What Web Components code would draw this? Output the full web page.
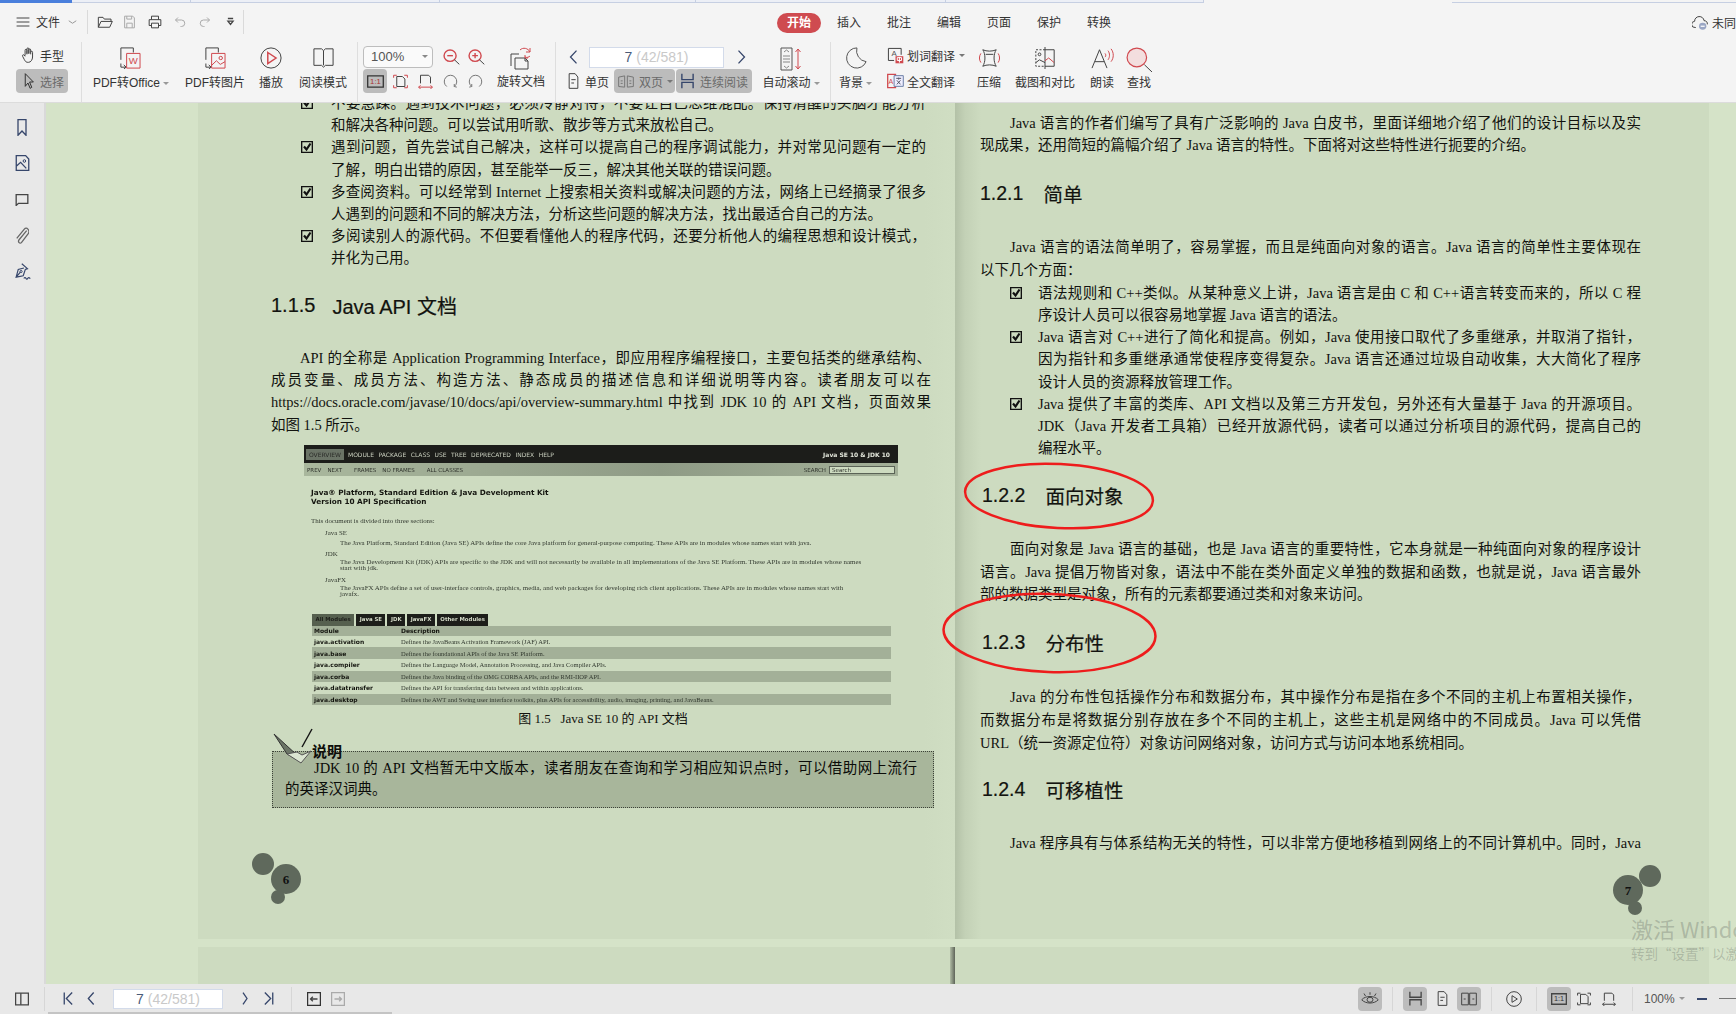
<!DOCTYPE html>
<html lang="zh-CN">
<head>
<meta charset="utf-8">
<title>PDF</title>
<style>
  html, body { margin: 0; padding: 0; height: 100%; overflow: hidden; }
  body { font-family: "Liberation Sans", "Noto Sans CJK SC", sans-serif; }
</style>
</head>
<body>
<wps-app></wps-app>
<script>
const RED = '#d0494f';
const NAVY = '#36466b';
// body copy is typed with plain commas, the book prints full-width ones
const cn = s => s.replace(/,/g, '\uFF0C');
const ICONS = {
  menu: '<path d="M1 4h22M1 12h22M1 20h22"/>',
  chev: '<path stroke="#999" d="M2 7l10 10L22 7"/>',
  folder: '<path d="M2 21V4h7l2 3h10v4M2 21l4-10h17l-4 10z"/>',
  save: '<g stroke="#aaa"><path d="M3 2h15l3 3v17H3z"/><path d="M7 22v-8h10v8M7 2v5h9V2"/></g>',
  print: '<path d="M6 8V2h12v6M6 18H2V8h20v10h-4M6 14h12v8H6z"/>',
  undo: '<path stroke="#aaa" d="M8 3L3 8l5 5M3 8h12a6.500 6.500 0 0 1 0 13h-2"/>',
  redo: '<path stroke="#aaa" d="M16 3l5 5-5 5M21 8H9a6.500 6.500 0 0 0 0 13h2"/>',
  more: '<path stroke-width="1.300" d="M5 4h14M5 11h14l-7 9z"/>',
  hand: '<path d="M7 13V5a1.600 1.600 0 0 1 3.200 0v6M10.200 10V3a1.600 1.600 0 0 1 3.200 0v7M13.400 10V4.500a1.600 1.600 0 0 1 3.200 0V11M16.600 8a1.600 1.600 0 0 1 3.200 0v7c0 4-3 8-7 8h-1c-3 0-4-1-6-4l-3-5c-1-2 1-3 2.500-2L7 14"/>',
  cursor: '<path stroke="#333" d="M6 1v19l5-5 4 8 3-1.500-4-8h7z"/>',
  pdfoffice: `<path d="M3 14V1h13v5M3 18v4h5M6 19.500l2.500 2.500L6 24"/><rect x="9" y="7" width="14" height="16" stroke="${RED}"/><text x="16" y="19" font-size="10" text-anchor="middle" fill="${RED}" stroke="none" font-family="Liberation Sans">W</text>`,
  pdfimage: `<path d="M3 14V1h13v5M3 18v4h5M6 19.500l2.500 2.500L6 24"/><g stroke="${RED}"><rect x="9" y="7" width="14" height="16"/><circle cx="18.500" cy="12" r="1.800"/><path d="M9 20l5-5 4 4 5-3"/></g>`,
  play: `<circle cx="12" cy="12" r="11" stroke="#444"/><path stroke="${RED}" stroke-width="1.500" d="M8.500 6l9 6-9 6z"/>`,
  book: '<path d="M2 2h8l2 2 2-2h8v18h-8l-2 2-2-2H2zM12 4v16"/>',
  zoomout: `<circle cx="10" cy="10" r="8.500" stroke="${RED}" stroke-width="1.400"/><path stroke="${RED}" stroke-width="1.400" d="M6 10h8"/><path d="M16 16l7 7"/>`,
  zoomin: `<circle cx="10" cy="10" r="8.500" stroke="${RED}" stroke-width="1.400"/><path stroke="${RED}" stroke-width="1.400" d="M6 10h8M10 6v8"/><path d="M16 16l7 7"/>`,
  rotatedoc: `<path d="M2 20V8h8M6 23V12h10l3 3v8zM16 12v3h3"/><path stroke="${RED}" d="M11 4c3-3 8-2 10 2M21 2v4h-4M21 10c-1 1-3 2-5 1M16 9v3h3"/>`,
  actual: `<rect x="1" y="3" width="22" height="18" stroke="#333" stroke-width="1.300"/><text x="12" y="16" font-size="11" text-anchor="middle" fill="#a33" stroke="none" font-family="Liberation Sans">1:1</text>`,
  fitpage: `<path stroke="${RED}" d="M1 6V2h5M18 2h5v4M1 18v4h5M18 22h5v-4"/><path d="M6 4h9l4 4v12H6z"/>`,
  fitwidth: `<path d="M4 15V2h13l3 3v10"/><path stroke="${RED}" d="M1 21h22M4 18l-3 3 3 3M20 18l3 3-3 3"/>`,
  rotl: '<path stroke="#777" d="M6 20A10 10 0 1 1 18 20M18 20v-4M18 20l4 1"/>',
  rotr: '<path stroke="#777" d="M18 20A10 10 0 1 0 6 20M6 20v-4M6 20l-4 1"/>',
  prev: `<path stroke="${NAVY}" stroke-width="1.300" d="M20 1L4 12l16 11"/>`,
  next: `<path stroke="${NAVY}" stroke-width="1.300" d="M4 1l16 11L4 23"/>`,
  first: `<path stroke="${NAVY}" stroke-width="1.300" d="M3 1v22M22 1L8 12l14 11"/>`,
  last: `<path stroke="${NAVY}" stroke-width="1.300" d="M21 1v22M2 1l14 11L2 23"/>`,
  single: '<path d="M4 1h11l5 5v17H4zM8 10h8M8 15h5"/>',
  double: `<path stroke="#777" d="M1 5l9-2v18l-9-1zM23 5l-9-2v18l9-1zM4 11h3M17 11h3M4 15h3M17 15h3"/>`,
  cont: `<path stroke="${NAVY}" stroke-width="1.400" d="M3 1v9h18V1M3 23v-9h18v9"/>`,
  autoscroll: `<rect x="2" y="1" width="11" height="22" stroke="#555"/><path stroke="#888" d="M5 5l2.500-2L10 5M5 19l2.500 2 2.500-2M4 9h7M4 12h7M4 15h7"/><path stroke="${RED}" d="M19 2v20M16.500 5L19 2l2.500 3M16.500 19l2.500 3 2.500-3"/>`,
  moon: '<path stroke="#555" d="M13 1A11 11 0 1 0 23 16 12 12 0 0 1 13 1z"/>',
  transword: `<path d="M2 19V2h18v9M2 19h8"/><text x="10" y="13" font-size="11" text-anchor="middle" fill="#555" stroke="none" font-family="Liberation Sans">A</text><rect x="12" y="13" width="11" height="10" fill="${RED}" stroke="none"/><path stroke="#fff" d="M14.500 15v4h6v-4zM17.500 14v8"/>`,
  transfull: `<rect x="1" y="2" width="11" height="20" stroke="${RED}" stroke-width="1.300"/><rect x="10" y="4" width="13" height="16" fill="#eef" stroke="#6c7fa6"/><text x="5.500" y="16" font-size="10" text-anchor="middle" fill="${RED}" stroke="none" font-family="Liberation Sans">A</text><path stroke="#556" d="M13 8h7M16.500 7v3M14 17l5-6M14 11l5 6"/>`,
  compress: `<path d="M5 3c4 2 10 2 14 0-3 5-3 13 0 18-4-2-10-2-14 0 3-5 3-13 0-18zM8 8h8"/><path stroke="${RED}" d="M3 7c-2 3-2 7 0 10M21 7c2 3 2 7 0 10"/>`,
  compare: `<path stroke-dasharray="2 1.500" d="M12 3H2v18h10"/><path d="M12 3h10v18H12M12 0v24"/><circle cx="6" cy="8" r="1.500"/><path d="M2 17l4-3 6 3"/><path stroke="${RED}" d="M12 15l4-3 6 5"/>`,
  read: `<path stroke="#444" d="M2 23L9.500 3 17 23M5 16h9"/><path stroke="${RED}" d="M15 7c1 1 1 3 0 4M18 4c2 3 2 7 0 10M21 2c3 4 3 10 0 14"/>`,
  find: `<circle cx="10" cy="10" r="9" stroke="${RED}" fill="#f3dede" stroke-width="1.200"/><path d="M17 17l7 7"/>`,
  cloud: '<path d="M6 20H5a5 5 0 0 1-1-10 7 7 0 0 1 14-1 5.500 5.500 0 0 1 5 6"/><circle cx="16" cy="18" r="5.500" fill="#9aa6c4" stroke="none"/><path stroke="#fff" stroke-width="1.200" d="M13 18h6"/>',
  bookmark: `<path stroke="${NAVY}" stroke-width="1.300" d="M4 1h16v22l-8-6-8 6z"/>`,
  picture: `<path stroke="${NAVY}" stroke-width="1.300" d="M2 1h15l5 5v17H2zM2 17l7-6 9 9"/><circle cx="15" cy="9" r="2" stroke="${NAVY}"/>`,
  comment: '<path stroke-width="1.300" d="M2 3h20v16H6l-4 4z"/>',
  clip: '<path stroke="#666" stroke-width="1.300" d="M20 5L7 18a2.500 2.500 0 0 0 4 4L23 9c3-4-3-10-7-6L3 16"/>',
  pen: `<path stroke="${NAVY}" stroke-width="1.200" d="M11 1l8 7-3 1-3 9-10 2 3-11 8-2M3 20l6-7"/><circle cx="10" cy="12" r="1.500" stroke="${NAVY}"/><path stroke="${NAVY}" stroke-width="1.200" d="M14 22c1-2 2-2 3 0s2 0 3-1 2 0 3 1"/>`,
  panel: '<rect x="1" y="2" width="22" height="20" stroke-width="1.300"/><path stroke-width="1.300" d="M10 2v20"/>',
  back: `<rect x="1" y="1" width="22" height="22" stroke="#333" stroke-width="1.300"/><path stroke-width="1.300" d="M18 12H6M10 8l-4 4 4 4"/>`,
  fwd: `<rect x="1" y="1" width="22" height="22" stroke="#aaa" stroke-width="1.300"/><path stroke="#aaa" stroke-width="1.300" d="M6 12h12M14 8l4 4-4 4"/>`,
  eye: '<path d="M1 14c5-7 17-7 22 0-5 7-17 7-22 0z"/><circle cx="12" cy="14" r="4"/><path d="M12 2v4M4 4l2 4M20 4l-2 4"/>',
  splay: '<circle cx="12" cy="12" r="11"/><path d="M9 7l8 5-8 5z"/>',
  sfit: '<path d="M1 6V2h5M18 2h5v4M1 18v4h5M18 22h5v-4"/><path d="M6 4h9l4 4v12H6z"/>',
  swidth: '<path d="M4 15V2h13l3 3v10"/><path d="M1 21h22M4 18l-3 3 3 3M20 18l3 3-3 3"/>',
  sdouble: '<rect x="1" y="2" width="10" height="20"/><rect x="13" y="2" width="10" height="20"/><path d="M4 12h3M17 12h3"/>',
  sactual: '<rect x="1" y="3" width="22" height="18" stroke-width="1.300"/><text x="12" y="16" font-size="11" text-anchor="middle" fill="#333" stroke="none" font-family="Liberation Sans">1:1</text>',
  scont: '<path stroke-width="1.300" d="M3 1v9h18V1M3 23v-9h18v9"/>',
  check: '<rect x="1" y="1" width="22" height="22" stroke="#111" stroke-width="1.700"/><path stroke="#111" stroke-width="2.200" d="M6 11l5 6 8-12"/>'
};

class UiIcon extends HTMLElement {
  connectedCallback() {
    const w = this.getAttribute('w') || 16;
    const h = this.getAttribute('h') || w;
    const name = this.getAttribute('name');
    this.attachShadow({ mode: 'open' }).innerHTML = `
      <style>
        :host { display: inline-flex; flex: none; line-height: 0; }
        svg * { vector-effect: non-scaling-stroke; }
      </style>
      <svg width="${w}" height="${h}" viewBox="0 0 24 24" preserveAspectRatio="none" fill="none" stroke="#444" stroke-width="1">${ICONS[name]}</svg>`;
  }
}
customElements.define('ui-icon', UiIcon);

class ToolBig extends HTMLElement {
  connectedCallback() {
    const caret = this.hasAttribute('caret') ? '<i></i>' : '';
    this.attachShadow({ mode: 'open' }).innerHTML = `
      <style>
        :host { display: flex; flex-direction: column; align-items: center; flex: none; height: 60px; padding-top: 5px; box-sizing: border-box; }
        .ic { height: 24px; margin-bottom: 4px; display: flex; align-items: flex-start; }
        .lb { font-size: 12px; line-height: 16px; color: #333; white-space: nowrap; display: flex; align-items: center; }
        i { width: 0; height: 0; border: 3px solid transparent; border-top: 3px solid #999; border-bottom: 0; margin-left: 3px; }
      </style>
      <div class="ic"><slot></slot></div>
      <div class="lb">${this.getAttribute('label')}${caret}</div>`;
  }
}
customElements.define('tool-big', ToolBig);

class ToolSmall extends HTMLElement {
  connectedCallback() {
    const caret = this.hasAttribute('caret') ? '<i></i>' : '';
    const label = this.getAttribute('label');
    this.attachShadow({ mode: 'open' }).innerHTML = `
      <style>
        :host { display: inline-flex; align-items: center; flex: none; height: 24px; box-sizing: border-box; font-size: 12px; color: #333; white-space: nowrap; border-radius: 4px; }
        :host([active]) { background: #bcbcbc; color: #6a6a6a; }
        :host([square]) { width: 24px; justify-content: center; }
        span { margin-left: var(--g, 5px); }
        i { width: 0; height: 0; border: 3px solid transparent; border-top: 3px solid #777; border-bottom: 0; margin-left: 4px; }
      </style>
      <slot></slot>${label ? `<span>${label}</span>` : ''}${caret}`;
  }
}
customElements.define('tool-small', ToolSmall);

class WpsToolbar extends HTMLElement {
  connectedCallback() {
    this.attachShadow({ mode: 'open' }).innerHTML = `
      <style>
        :host { display: block; height: 103px; box-sizing: border-box; background: #f4f4f4; border-bottom: 1px solid #dcdcdc; overflow: hidden; font-size: 12px; color: #333; flex: none; }
        .strip { display: flex; height: 3px; box-sizing: border-box; }
        .strip div { flex: none; border-bottom: 1px solid #c6cfe2; border-right: 1px solid #c6cfe2; box-sizing: border-box; background: #eceff6; }
        .strip .on { background: #4a7fdc; border: 0; }
        .strip .none { background: none; border: 0; }
        .row1 { display: flex; align-items: center; height: 39px; }
        .quick { width: 777px; flex: none; display: flex; align-items: center; padding-left: 16px; box-sizing: border-box; margin-top: -2px; }
        .sep { width: 1px; height: 24px; background: #dadada; flex: none; }
        .tab { margin-left: 26px; line-height: 20px; }
        .tab.on { margin-left: 0; background: #cf4b50; color: #fff; font-weight: 700; border-radius: 10px; padding: 0 10px; }
        .tab.n2 { margin-left: 16px; }
        .cloud { margin-left: auto; width: 44px; display: flex; align-items: center; overflow: hidden; white-space: nowrap; gap: 4px; flex: none; }
        .row2 { display: flex; height: 60px; }
        .grp { display: flex; flex: none; height: 60px; box-sizing: border-box; border-right: 1px solid #dedede; }
        .col { display: flex; flex-direction: column; flex: none; }
        .line { display: flex; align-items: center; flex: none; }
        .combo { width: 70px; height: 22px; box-sizing: border-box; border: 1px solid #bdbdbd; border-radius: 4px; display: flex; align-items: center; justify-content: space-between; padding: 0 4px 0 7px; background: #fafafa; color: #555; font-size: 13px; }
        .combo i { width: 0; height: 0; border: 3px solid transparent; border-top: 3px solid #888; border-bottom: 0; }
        .pageno { width: 135px; height: 21px; box-sizing: border-box; background: #fff; border: 1px solid #d3dbea; text-align: center; font-size: 14px; line-height: 19px; color: #c9c9c9; }
        .pageno b { font-weight: 400; color: #4a5a78; }
      </style>
      <div class="strip">
        <div class="on" style="width:72px"></div><div style="width:119px"></div><div style="width:249px"></div><div style="width:256px"></div><div style="width:250px"></div><div style="width:258px"></div><div class="none" style="width:248px"></div><div style="width:284px;background:none;border-right:0"></div>
      </div>
      <div class="row1">
        <div class="quick">
          <ui-icon name="menu" w="14" h="12"></ui-icon>
          <span style="margin-left:6px">文件</span>
          <ui-icon name="chev" w="9" h="6" style="margin-left:8px"></ui-icon>
          <div class="sep" style="margin-left:10px"></div>
          <ui-icon name="folder" w="16" h="14" style="margin-left:9px"></ui-icon>
          <ui-icon name="save" w="13" h="14" style="margin-left:10px"></ui-icon>
          <ui-icon name="print" w="14" h="14" style="margin-left:12px"></ui-icon>
          <ui-icon name="undo" w="12" h="12" style="margin-left:12px"></ui-icon>
          <ui-icon name="redo" w="12" h="12" style="margin-left:13px"></ui-icon>
          <ui-icon name="more" w="9" h="9" style="margin-left:15px"></ui-icon>
          <div class="sep" style="margin-left:8px"></div>
        </div>
        <span class="tab on">开始</span>
        <span class="tab n2">插入</span><span class="tab">批注</span><span class="tab">编辑</span><span class="tab">页面</span><span class="tab">保护</span><span class="tab">转换</span>
        <div class="cloud"><ui-icon name="cloud" w="16" h="15"></ui-icon><span>未同步</span></div>
      </div>
      <div class="row2">
        <div class="grp" style="width:82px;padding-left:16px">
          <div class="col" style="padding-top:1px">
            <tool-small label="手型" style="padding-left:5px;margin-bottom:2px"><ui-icon name="hand" w="14" h="16"></ui-icon></tool-small>
            <tool-small label="选择" active style="padding:0 4px 0 6px;width:52px;box-sizing:border-box"><ui-icon name="cursor" w="13" h="16"></ui-icon></tool-small>
          </div>
        </div>
        <div class="grp" style="width:276px;padding-left:9px">
          <tool-big label="PDF转Office" caret style="width:80px"><ui-icon name="pdfoffice" w="23" h="22" style="margin-right:4px"></ui-icon></tool-big>
          <tool-big label="PDF转图片" style="width:60px;margin-left:14px"><ui-icon name="pdfimage" w="23" h="22" style="margin-right:2px"></ui-icon></tool-big>
          <tool-big label="播放" style="width:30px;margin-left:11px"><ui-icon name="play" w="22" h="22"></ui-icon></tool-big>
          <tool-big label="阅读模式" style="width:50px;margin-left:12px"><ui-icon name="book" w="23" h="22"></ui-icon></tool-big>
        </div>
        <div class="grp" style="width:198px;padding-left:5px">
          <div class="col" style="padding-top:2px;width:122px">
            <div class="line" style="height:25px">
              <div class="combo"><span>100%</span><i></i></div>
              <ui-icon name="zoomout" w="17" h="16" style="margin-left:10px"></ui-icon>
              <ui-icon name="zoomin" w="17" h="16" style="margin-left:8px"></ui-icon>
            </div>
            <div class="line" style="gap:1px">
              <tool-small active square><ui-icon name="actual" w="17" h="15"></ui-icon></tool-small>
              <tool-small square><ui-icon name="fitpage" w="15" h="15"></ui-icon></tool-small>
              <tool-small square><ui-icon name="fitwidth" w="15" h="15"></ui-icon></tool-small>
              <tool-small square><ui-icon name="rotl" w="15" h="15"></ui-icon></tool-small>
              <tool-small square><ui-icon name="rotr" w="15" h="15"></ui-icon></tool-small>
            </div>
          </div>
          <tool-big label="旋转文档" style="width:50px;margin-left:11px;padding-top:4px"><ui-icon name="rotatedoc" w="24" h="24"></ui-icon></tool-big>
        </div>
        <div class="grp" style="width:275px;padding-left:8px">
          <div class="col" style="padding-top:3px">
            <div class="line" style="height:24px">
              <ui-icon name="prev" w="9" h="14" style="margin-left:5px"></ui-icon>
              <div class="pageno" style="margin:0 13px 0 11px"><b>7</b> (42/581)</div>
              <ui-icon name="next" w="9" h="14"></ui-icon>
            </div>
            <div class="line">
              <tool-small label="单页" style="padding-left:3px"><ui-icon name="single" w="13" h="16"></ui-icon></tool-small>
              <tool-small label="双页" caret active style="margin-left:5px;width:61px;padding-left:4px;box-sizing:border-box"><ui-icon name="double" w="16" h="15"></ui-icon></tool-small>
              <tool-small label="连续阅读" active style="margin-left:1px;width:76px;padding-left:4px;box-sizing:border-box"><ui-icon name="cont" w="15" h="16"></ui-icon></tool-small>
            </div>
          </div>
          <tool-big label="自动滚动" caret style="width:60px;margin-left:9px"><ui-icon name="autoscroll" w="24" h="24"></ui-icon></tool-big>
        </div>
        <div class="grp" style="border:0;padding-left:7px">
          <tool-big label="背景" caret style="width:35px"><ui-icon name="moon" w="22" h="22"></ui-icon></tool-big>
          <div class="col" style="margin-left:14px;width:81px">
            <tool-small label="划词翻译" caret style="--g:3px;height:27px"><ui-icon name="transword" w="17" h="17"></ui-icon></tool-small>
            <tool-small label="全文翻译" style="--g:3px"><ui-icon name="transfull" w="17" h="16"></ui-icon></tool-small>
          </div>
          <tool-big label="压缩" style="width:24px;margin-left:9px"><ui-icon name="compress" w="23" h="22"></ui-icon></tool-big>
          <tool-big label="截图和对比" style="width:60px;margin-left:14px"><ui-icon name="compare" w="22" h="22"></ui-icon></tool-big>
          <tool-big label="朗读" style="width:24px;margin-left:15px"><ui-icon name="read" w="24" h="22"></ui-icon></tool-big>
          <tool-big label="查找" style="width:24px;margin-left:13px"><ui-icon name="find" w="26" h="25"></ui-icon></tool-big>
        </div>
      </div>`;
  }
}
customElements.define('wps-toolbar', WpsToolbar);

class WpsSidebar extends HTMLElement {
  connectedCallback() {
    const items = [['bookmark', 12, 17], ['picture', 15, 16], ['comment', 14, 13], ['clip', 14, 17], ['pen', 17, 17]];
    this.attachShadow({ mode: 'open' }).innerHTML = `
      <style>
        :host { display: flex; flex-direction: column; flex: none; width: 46px; box-sizing: border-box; background: #e8e8e8; border-right: 2px solid #d9d9d9; padding-top: 6px; }
        div { height: 36px; display: flex; align-items: center; justify-content: center; }
      </style>
      ${items.map(i => `<div><ui-icon name="${i[0]}" w="${i[1]}" h="${i[2]}"></ui-icon></div>`).join('')}`;
  }
}
customElements.define('wps-sidebar', WpsSidebar);

class WpsStatus extends HTMLElement {
  connectedCallback() {
    this.attachShadow({ mode: 'open' }).innerHTML = `
      <style>
        :host { display: block; height: 30px; flex: none; background: #e8e8e8; box-sizing: border-box; font-size: 12px; color: #555; }
        .row { display: flex; align-items: center; height: 28px; padding: 1px 0 0 15px; box-sizing: border-box; overflow: hidden; }
        .sep { width: 1px; height: 24px; background: #d6d6d6; flex: none; }
        .pageno { width: 110px; height: 20px; flex: none; box-sizing: border-box; background: #fff; border: 1px solid #d3dbea; text-align: center; font-size: 14px; line-height: 18px; color: #c9c9c9; margin-left: 18px; }
        .pageno b { font-weight: 400; color: #4a5a78; }
        .right { margin-left: auto; display: flex; align-items: center; width: 378px; flex: none; }
        .crt { width: 0; height: 0; border: 3px solid transparent; border-top: 3px solid #999; border-bottom: 0; margin-left: 4px; flex: none; }
        .minus { width: 10px; height: 2px; background: ${NAVY}; margin-left: 12px; flex: none; }
        .track { width: 20px; height: 1px; background: #777; margin-left: 12px; flex: none; }
        .scroll { height: 2px; width: 344px; margin-left: 48px; background: #c4c4c4; }
      </style>
      <div class="row">
        <ui-icon name="panel" w="14" h="14"></ui-icon>
        <div class="sep" style="margin-left:15px"></div>
        <ui-icon name="first" w="10" h="13" style="margin-left:18px"></ui-icon>
        <ui-icon name="prev" w="8" h="13" style="margin-left:14px"></ui-icon>
        <div class="pageno"><b>7</b> (42/581)</div>
        <ui-icon name="next" w="6" h="13" style="margin-left:19px"></ui-icon>
        <ui-icon name="last" w="10" h="13" style="margin-left:16px"></ui-icon>
        <div class="sep" style="margin-left:17px"></div>
        <ui-icon name="back" w="14" h="14" style="margin-left:15px"></ui-icon>
        <ui-icon name="fwd" w="14" h="14" style="margin-left:10px"></ui-icon>
        <div class="right">
          <tool-small active square><ui-icon name="eye" w="18" h="15"></ui-icon></tool-small>
          <div class="sep" style="margin-left:10px"></div>
          <tool-small active square style="margin-left:10px"><ui-icon name="scont" w="15" h="15"></ui-icon></tool-small>
          <tool-small square style="margin-left:3px"><ui-icon name="single" w="13" h="15"></ui-icon></tool-small>
          <tool-small active square style="margin-left:3px"><ui-icon name="sdouble" w="16" h="14"></ui-icon></tool-small>
          <div class="sep" style="margin-left:10px"></div>
          <tool-small square style="margin-left:10px"><ui-icon name="splay" w="16" h="16"></ui-icon></tool-small>
          <div class="sep" style="margin-left:10px"></div>
          <tool-small active square style="margin-left:10px"><ui-icon name="sactual" w="16" h="14"></ui-icon></tool-small>
          <tool-small square style="margin-left:1px"><ui-icon name="sfit" w="14" h="14"></ui-icon></tool-small>
          <tool-small square style="margin-left:1px"><ui-icon name="swidth" w="14" h="14"></ui-icon></tool-small>
          <div class="sep" style="margin-left:11px"></div>
          <span style="margin-left:11px">100%</span><i class="crt"></i>
          <div class="minus"></div><div class="track"></div>
        </div>
      </div>
      <div class="scroll"></div>`;
  }
}
customElements.define('wps-status', WpsStatus);

const PAGE_CSS = `
  :host { display: flex; flex-direction: column; flex: none; box-sizing: border-box; position: relative; font-family: "Liberation Serif", "Noto Sans CJK SC", serif; font-size: 14.500px; color: #12130f; }
  .j, .l { display: block; white-space: nowrap; line-height: var(--lh, 22.200px); }
  .j { text-align: justify; text-align-last: justify; }
  .i { padding-left: 30px; }
`;

class SecTitle extends HTMLElement {
  connectedCallback() {
    this.attachShadow({ mode: 'open' }).innerHTML = `
      <style>
        :host { display: flex; height: 28px; align-items: center; font-family: "Liberation Sans", "Noto Sans CJK SC", sans-serif; font-size: 19.500px; color: #12130f; white-space: nowrap; flex: none; -webkit-text-stroke: .2px #12130f; }
        span { margin-right: var(--sp, 20px); }
      </style>
      <span>${this.getAttribute('num')}</span><slot></slot>`;
  }
}
customElements.define('sec-title', SecTitle);

class CheckItem extends HTMLElement {
  connectedCallback() {
    this.attachShadow({ mode: 'open' }).innerHTML = `
      <style>
        :host { display: flex; flex: none; margin-left: 30px; }
        ui-icon { margin: 5px var(--cg, 18px) 0 0; }
        div { flex: 1; min-width: 0; }
      </style>
      <ui-icon name="check" w="12" h="12"></ui-icon><div><slot></slot></div>`;
  }
}
customElements.define('check-item', CheckItem);

class PageNo extends HTMLElement {
  connectedCallback() {
    const n = this.getAttribute('n');
    const flip = n === '7';
    const circles = flip
      ? '<circle cx="25" cy="31" r="15"/><circle cx="47" cy="17" r="11"/><circle cx="32" cy="49" r="7"/>'
      : '<circle cx="34" cy="26" r="15"/><circle cx="11" cy="11" r="11"/><circle cx="26" cy="44" r="7"/>';
    const tx = flip ? 25 : 34;
    const ty = flip ? 36 : 31;
    this.attachShadow({ mode: 'open' }).innerHTML = `
      <style>:host { display: block; flex: none; line-height: 0; }</style>
      <svg width="60" height="58" viewBox="0 0 60 58">
        <g fill="#5f695c">${circles}</g>
        <text x="${tx}" y="${ty}" font-size="13" font-weight="700" text-anchor="middle" fill="#111" font-family="Liberation Serif">${n}</text>
      </svg>`;
  }
}
customElements.define('page-no', PageNo);

class JavaShot extends HTMLElement {
  connectedCallback() {
    const rows = [
      ['java.activation', 'Defines the JavaBeans Activation Framework (JAF) API.'],
      ['java.base', 'Defines the foundational APIs of the Java SE Platform.'],
      ['java.compiler', 'Defines the Language Model, Annotation Processing, and Java Compiler APIs.'],
      ['java.corba', 'Defines the Java binding of the OMG CORBA APIs, and the RMI-IIOP API.'],
      ['java.datatransfer', 'Defines the API for transferring data between and within applications.'],
      ['java.desktop', 'Defines the AWT and Swing user interface toolkits, plus APIs for accessibility, audio, imaging, printing, and JavaBeans.']
    ];
    this.attachShadow({ mode: 'open' }).innerHTML = `
      <style>
        :host { display: block; flex: none; width: 594px; height: 262px; margin-left: 33px; overflow: hidden; font-family: "Liberation Serif", serif; font-size: 6.900px; color: #333a30; filter: blur(.3px); }
        .nav { height: 18px; background: #1c1d1a; color: #c9cfbe; display: flex; align-items: center; font: 6px "DejaVu Sans", sans-serif; padding: 0 8px 0 2px; white-space: nowrap; }
        .nav b { background: #6a7366; padding: 2px 3px; margin-right: 4px; font-weight: 400; color: #2a2b28; }
        .nav span { margin-right: 4.500px; }
        .nav em { margin-left: auto; font-style: normal; font-weight: 700; color: #e4e8dc; }
        .sub { height: 13px; background: linear-gradient(90deg, #a9b79d, #8f9b86 60%, #a3b098); display: flex; align-items: center; font: 5.500px "DejaVu Sans", sans-serif; padding: 0 3px; white-space: nowrap; color: #2f332c; }
        .sub span { margin-right: 6px; }
        .sub .s { margin: 0 3px 0 auto; }
        .sub .in { width: 66px; height: 8px; border: 1px solid #5a6356; box-sizing: border-box; background: #cddbc0; line-height: 6px; padding-left: 2px; margin-right: 0; }
        .body { padding-left: 7px; white-space: nowrap; }
        h4 { margin: 13px 0 0; font: 700 7.300px/8.500px "DejaVu Sans", sans-serif; color: #14150f; }
        .t { line-height: 8px; }
        .d { line-height: 6.500px; padding-left: 29px; }
        .h { padding-left: 14px; }
        .tabs { display: flex; gap: 2px; height: 12px; margin-top: 16px; padding-left: 1px; font: 700 5.400px/11px "DejaVu Sans", sans-serif; color: #d4dac8; }
        .tabs span { background: #1d1e1a; padding: 0 3.500px; }
        .tabs span:first-child { background: #56604f; color: #1d1e1a; }
        .tbl { margin: 0 7px 0 1px; font-size: 6.500px; }
        .r { display: flex; height: 11.600px; align-items: center; }
        .r b { width: 89px; font: 700 6px "DejaVu Sans", sans-serif; padding-left: 2px; box-sizing: border-box; color: #14150f; flex: none; }
        .r:nth-child(odd) { background: #a3b098; }
        .hd { height: 10px; }
      </style>
      <div class="nav"><b>OVERVIEW</b><span>MODULE</span><span>PACKAGE</span><span>CLASS</span><span>USE</span><span>TREE</span><span>DEPRECATED</span><span>INDEX</span><span>HELP</span><em>Java SE 10 &amp; JDK 10</em></div>
      <div class="sub"><span>PREV</span><span>NEXT</span><span style="margin-left:6px">FRAMES</span><span>NO FRAMES</span><span style="margin-left:6px">ALL CLASSES</span><span class="s">SEARCH</span><span class="in">Search</span></div>
      <div class="body">
        <h4>Java® Platform, Standard Edition &amp; Java Development Kit<br>Version 10 API Specification</h4>
        <div class="t" style="margin-top:11px">This document is divided into three sections:</div>
        <div class="t h" style="margin-top:4px">Java SE</div>
        <div class="d" style="margin-top:3px">The Java Platform, Standard Edition (Java SE) APIs define the core Java platform for general-purpose computing. These APIs are in modules whose names start with java.</div>
        <div class="t h" style="margin-top:3px">JDK</div>
        <div class="d" style="margin-top:1px">The Java Development Kit (JDK) APIs are specific to the JDK and will not necessarily be available in all implementations of the Java SE Platform. These APIs are in modules whose names<br>start with jdk.</div>
        <div class="t h" style="margin-top:4px">JavaFX</div>
        <div class="d" style="margin-top:1px">The JavaFX APIs define a set of user-interface controls, graphics, media, and web packages for developing rich client applications. These APIs are in modules whose names start with<br>javafx.</div>
        <div class="tabs"><span>All Modules</span><span>Java SE</span><span>JDK</span><span>JavaFX</span><span>Other Modules</span></div>
        <div class="tbl">
          <div class="r hd"><b>Module</b><b style="padding-left:0">Description</b></div>
          ${rows.map(r => `<div class="r"><b>${r[0]}</b><span>${r[1]}</span></div>`).join('')}
        </div>
      </div>`;
  }
}
customElements.define('java-shot', JavaShot);

class NoteBox extends HTMLElement {
  connectedCallback() {
    this.attachShadow({ mode: 'open' }).innerHTML = `
      <style>
        :host { display: block; flex: none; position: relative; margin: 23px 0 0 1px; width: 662px; height: 57px; box-sizing: border-box; padding: 6px 16px 0 12px; background: #a8b69b; border: 1px dotted #3c4238; color: #0b0c09; }
        svg { position: absolute; left: 0; top: -24px; overflow: visible; }
        .tt { position: absolute; left: 39px; top: -11px; font: 700 15px/20px "Noto Sans CJK SC", sans-serif; color: #0d0e0b; }
        .j, .l { display: block; white-space: nowrap; line-height: 21px; }
        .j { text-align-last: justify; padding-left: 29px; }
      </style>
      <svg width="42" height="38" viewBox="0 0 42 38">
        <path d="M1 6l24 22 3 6L14 26z" fill="#6b7566" stroke="#333"/>
        <path d="M14 26l14 9 10-12-9 4-5-3z" fill="#dbe5d1" stroke="#555"/>
        <path d="M29 19L39 1" stroke="#111" stroke-width="1.400" fill="none"/>
      </svg>
      <span class="tt">说明</span>
      ${cn(`<span class="j">JDK 10 的 API 文档暂无中文版本,读者朋友在查询和学习相应知识点时,可以借助网上流行</span>
      <span class="l">的英译汉词典。</span>`)}`;
  }
}
customElements.define('note-box', NoteBox);

class PageLeft extends HTMLElement {
  connectedCallback() {
    this.attachShadow({ mode: 'open' }).innerHTML = `
      <style>
        ${PAGE_CSS}
        :host { width: 757px; padding: 0 24px 0 73px; background: linear-gradient(90deg, #cddbc0 96%, #d0dec3); }
        check-item { margin-right: 5px; }
        .p { --lh: 22.400px; margin-top: 27px; }
        .p .i { padding-left: 29px; }
        .cap { margin-top: 3px; height: 18px; line-height: 18px; text-align: center; font-size: 13px; padding-left: 4px; }
        sec-title { margin-top: 22px; --sp: 17px; font-size: 20px; }
        page-no { margin: 45px 0 0 -19px; }
      </style>
      ${cn(`<check-item style="margin-top:-11px">
        <span class="j">不要急躁。遇到技术问题,必须冷静对待,不要让自己思维混乱。保持清醒的头脑才能分析</span>
        <span class="l">和解决各种问题。可以尝试用听歌、散步等方式来放松自己。</span>
      </check-item>
      <check-item>
        <span class="j">遇到问题,首先尝试自己解决,这样可以提高自己的程序调试能力,并对常见问题有一定的</span>
        <span class="l">了解,明白出错的原因,甚至能举一反三,解决其他关联的错误问题。</span>
      </check-item>
      <check-item>
        <span class="j">多查阅资料。可以经常到 Internet 上搜索相关资料或解决问题的方法,网络上已经摘录了很多</span>
        <span class="l">人遇到的问题和不同的解决方法,分析这些问题的解决方法,找出最适合自己的方法。</span>
      </check-item>
      <check-item>
        <span class="j">多阅读别人的源代码。不但要看懂他人的程序代码,还要分析他人的编程思想和设计模式,</span>
        <span class="l">并化为己用。</span>
      </check-item>
      <sec-title num="1.1.5">Java API 文档</sec-title>
      <div class="p">
        <span class="j i">API 的全称是 Application Programming Interface,即应用程序编程接口,主要包括类的继承结构、</span>
        <span class="j">成员变量、成员方法、构造方法、静态成员的描述信息和详细说明等内容。读者朋友可以在</span>
        <span class="j">https://docs.oracle.com/javase/10/docs/api/overview-summary.html 中找到 JDK 10 的 API 文档,页面效果</span>
        <span class="l">如图 1.5 所示。</span>
      </div>`)}
      <java-shot style="margin-top:9px"></java-shot>
      <div class="cap">图 1.5 &nbsp; Java SE 10 的 API 文档</div>
      <note-box></note-box>
      <page-no n="6"></page-no>`;
  }
}
customElements.define('page-left', PageLeft);

class PageRight extends HTMLElement {
  connectedCallback() {
    this.attachShadow({ mode: 'open' }).innerHTML = `
      <style>
        ${PAGE_CSS}
        :host { width: 754px; padding: 9px 68px 0 25px; background: linear-gradient(90deg, #b3c1a7 0, #c3d1b6 10px, #cddbc0 26px); }
        check-item { --cg: 16px; }
        sec-title { margin-top: 23px; }
        .off { margin-left: 2px; }
        .rings { position: absolute; left: 0; top: 0; overflow: visible; pointer-events: none; }
        page-no { margin: 5px -22px 0 auto; }
      </style>
      ${cn(`<span class="j i">Java 语言的作者们编写了具有广泛影响的 Java 白皮书,里面详细地介绍了他们的设计目标以及实</span>
      <span class="l">现成果,还用简短的篇幅介绍了 Java 语言的特性。下面将对这些特性进行扼要的介绍。</span>
      <sec-title num="1.2.1">简单</sec-title>
      <div style="margin-top:29px">
        <span class="j i">Java 语言的语法简单明了,容易掌握,而且是纯面向对象的语言。Java 语言的简单性主要体现在</span>
        <span class="l">以下几个方面&#xFF1A;</span>
      </div>
      <check-item style="margin-top:1px">
        <span class="j">语法规则和 C++类似。从某种意义上讲,Java 语言是由 C 和 C++语言转变而来的,所以 C 程</span>
        <span class="l">序设计人员可以很容易地掌握 Java 语言的语法。</span>
      </check-item>
      <check-item>
        <span class="j">Java 语言对 C++进行了简化和提高。例如,Java 使用接口取代了多重继承,并取消了指针,</span>
        <span class="j">因为指针和多重继承通常使程序变得复杂。Java 语言还通过垃圾自动收集,大大简化了程序</span>
        <span class="l">设计人员的资源释放管理工作。</span>
      </check-item>
      <check-item>
        <span class="j">Java 提供了丰富的类库、API 文档以及第三方开发包,另外还有大量基于 Java 的开源项目。</span>
        <span class="j">JDK&#xFF08;Java 开发者工具箱&#xFF09;已经开放源代码,读者可以通过分析项目的源代码,提高自己的</span>
        <span class="l">编程水平。</span>
      </check-item>
      <sec-title class="off" num="1.2.2" style="margin-top:22px">面向对象</sec-title>
      <div style="margin-top:29px;--lh:22.500px">
        <span class="j i">面向对象是 Java 语言的基础,也是 Java 语言的重要特性,它本身就是一种纯面向对象的程序设计</span>
        <span class="j">语言。Java 提倡万物皆对象,语法中不能在类外面定义单独的数据和函数,也就是说,Java 语言最外</span>
        <span class="l">部的数据类型是对象,所有的元素都要通过类和对象来访问。</span>
      </div>
      <sec-title class="off" num="1.2.3">分布性</sec-title>
      <div style="margin-top:29px;--lh:23px">
        <span class="j i">Java 的分布性包括操作分布和数据分布,其中操作分布是指在多个不同的主机上布置相关操作,</span>
        <span class="j">而数据分布是将数据分别存放在多个不同的主机上,这些主机是网络中的不同成员。Java 可以凭借</span>
        <span class="l">URL&#xFF08;统一资源定位符&#xFF09;对象访问网络对象,访问方式与访问本地系统相同。</span>
      </div>
      <sec-title class="off" num="1.2.4" style="margin-top:21px">可移植性</sec-title>
      <span class="j i" style="margin-top:28px">Java 程序具有与体系结构无关的特性,可以非常方便地移植到网络上的不同计算机中。同时,Java</span>`)}
      <page-no n="7"></page-no>
      <svg class="rings" width="754" height="836" fill="none" stroke="#ee1c1c" stroke-width="2.500">
        <ellipse cx="104" cy="393" rx="94" ry="32" transform="rotate(3 104 393)"/>
        <ellipse cx="94.500" cy="530" rx="106" ry="39" transform="rotate(2 94.500 530)"/>
      </svg>`;
  }
}
customElements.define('page-right', PageRight);

class DocCanvas extends HTMLElement {
  connectedCallback() {
    this.attachShadow({ mode: 'open' }).innerHTML = `
      <style>
        :host { display: flex; flex-direction: column; flex: 1; min-width: 0; position: relative; overflow: hidden; background: #d5e3c8; padding-left: 152px; }
        .pages { display: flex; height: 836px; flex: none; }
        .next { display: flex; height: 37px; margin-top: 8px; flex: none; }
        .next div { background: #cddbc0; }
        .next .a { width: 752px; }
        .next .sp { width: 5px; background: linear-gradient(90deg, #b0bca4, #5e6459); }
        .next .b { width: 754px; }
        .wm { position: absolute; left: 1585px; top: 814px; white-space: nowrap; color: rgba(90, 96, 90, .3); font-family: "Noto Sans CJK SC", sans-serif; line-height: 1; }
        .wm div:first-child { font-size: 22px; margin-bottom: 8px; }
        .wm div:last-child { font-size: 13.500px; }
      </style>
      <div class="pages"><page-left></page-left><page-right></page-right></div>
      <div class="next"><div class="a"></div><div class="sp"></div><div class="b"></div></div>
      <div class="wm"><div>激活 Windows</div><div>转到“设置”以激活 Windows。</div></div>`;
  }
}
customElements.define('doc-canvas', DocCanvas);

class WpsApp extends HTMLElement {
  connectedCallback() {
    this.attachShadow({ mode: 'open' }).innerHTML = `
      <style>
        :host { display: flex; flex-direction: column; width: 1736px; height: 1014px; overflow: hidden; font-family: "Liberation Sans", "Noto Sans CJK SC", sans-serif; }
        .mid { display: flex; flex: none; height: 881px; overflow: hidden; }
      </style>
      <wps-toolbar></wps-toolbar>
      <div class="mid"><wps-sidebar></wps-sidebar><doc-canvas></doc-canvas></div>
      <wps-status></wps-status>`;
  }
}
customElements.define('wps-app', WpsApp);
</script>
</body>
</html>
